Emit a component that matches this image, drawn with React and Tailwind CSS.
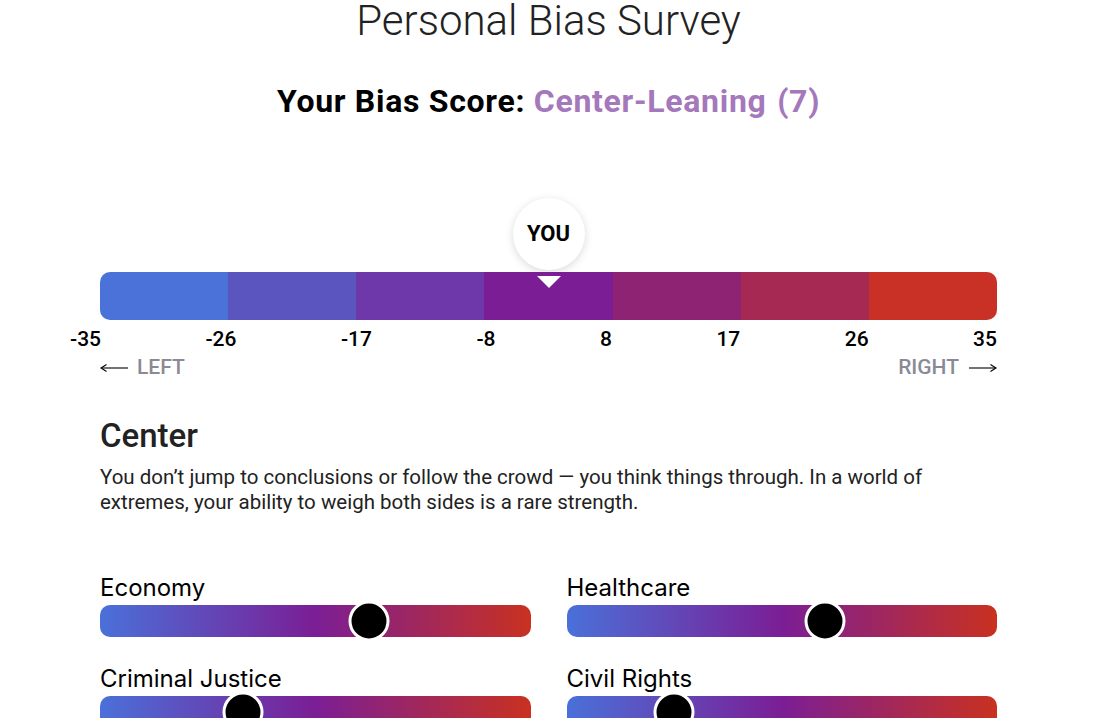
import React from "react";

const segments = ["#4b72d9", "#5b55c0", "#6e37aa", "#7b1e95", "#8e2374", "#a52953", "#c93126"];
const ticks = ["-35", "-26", "-17", "-8", "8", "17", "26", "35"];
const sliders = [
  { label: "Economy", pos: 0.624 },
  { label: "Healthcare", pos: 0.6 },
  { label: "Criminal Justice", pos: 0.332 },
  { label: "Civil Rights", pos: 0.249 },
];

function LeftArrow() {
  return (
    <svg width="28" height="10" viewBox="0 0 28 10" className="block">
      <path d="M1 5 H28" stroke="#000" strokeWidth="1.1" fill="none" />
      <path d="M6.5 1.5 L1 5 L6.5 8.5" stroke="#000" strokeWidth="1.1" fill="none" />
    </svg>
  );
}

function RightArrow() {
  return (
    <svg width="28" height="10" viewBox="0 0 28 10" className="block">
      <path d="M0 5 H27" stroke="#000" strokeWidth="1.1" fill="none" />
      <path d="M21.5 1.5 L27 5 L21.5 8.5" stroke="#000" strokeWidth="1.1" fill="none" />
    </svg>
  );
}

export default function App() {
  return (
    <div className="w-[1100px] h-[718px] overflow-hidden bg-white font-['Roboto',sans-serif]">
      <div className="pl-[100px] pr-[103px] flex flex-col">
        <h1 className="text-center text-[42px] font-light leading-none text-[#222]">
          Personal Bias Survey
        </h1>
        <h2 className="mt-[43px] text-center text-[32px] font-bold leading-none tracking-[0.7px] text-black">
          Your Bias Score: <span className="text-[#a577bb]">Center-Leaning</span>{" "}
          <span className="text-[#a577bb] ml-[2px]">(7)</span>
        </h2>

        <div className="mt-[81px] flex justify-center">
          <div className="w-[72px] h-[72px] rounded-full bg-white shadow-[0_2px_8px_rgba(0,0,0,0.15)] flex items-center justify-center">
            <span className="text-[22px] font-bold leading-none text-black">YOU</span>
          </div>
        </div>

        <div className="relative mt-[2px] h-[48px] flex rounded-[10px] overflow-hidden">
          {segments.map((c) => (
            <div key={c} className="flex-1" style={{ backgroundColor: c }} />
          ))}
          <div className="absolute left-1/2 -translate-x-1/2 top-[4px] w-0 h-0 border-l-[12px] border-r-[12px] border-t-[12px] border-l-transparent border-r-transparent border-t-white" />
        </div>

        <div className="mt-[9px] ml-[-30px] flex justify-between text-[21px] font-medium leading-none text-black">
          {ticks.map((t) => (
            <span key={t}>{t}</span>
          ))}
        </div>

        <div className="mt-[7px] flex justify-between items-center text-[21px] font-medium leading-none text-[#8a8a96]">
          <div className="flex items-center gap-[9px]">
            <LeftArrow />
            <span>LEFT</span>
          </div>
          <div className="flex items-center gap-[10px]">
            <span>RIGHT</span>
            <RightArrow />
          </div>
        </div>

        <h3 className="mt-[41px] text-[33px] font-medium leading-none text-[#222]">Center</h3>
        <p className="mt-[13px] text-[20.5px] leading-[25px] text-[#222]">
          You don’t jump to conclusions or follow the crowd — you think things through. In a world of
          extremes, your ability to weigh both sides is a rare strength.
        </p>

        <div className="mt-[59px] grid grid-cols-2 gap-x-[36px] gap-y-[28px] font-['Inter',sans-serif]">
          {sliders.map((s) => (
            <div key={s.label} className="flex flex-col">
              <div className="text-[24px] leading-[28px] text-black">{s.label}</div>
              <div className="relative mt-[3px] h-[32px] rounded-[10px] bg-[linear-gradient(90deg,#4a70d9_0%,#7b1e95_50%,#c93120_100%)]">
                <div
                  className="absolute top-1/2 -translate-x-1/2 -translate-y-1/2 w-[41px] h-[41px] rounded-full bg-black border-[3px] border-white"
                  style={{ left: `${s.pos * 100}%` }}
                />
              </div>
            </div>
          ))}
        </div>
      </div>
    </div>
  );
}
